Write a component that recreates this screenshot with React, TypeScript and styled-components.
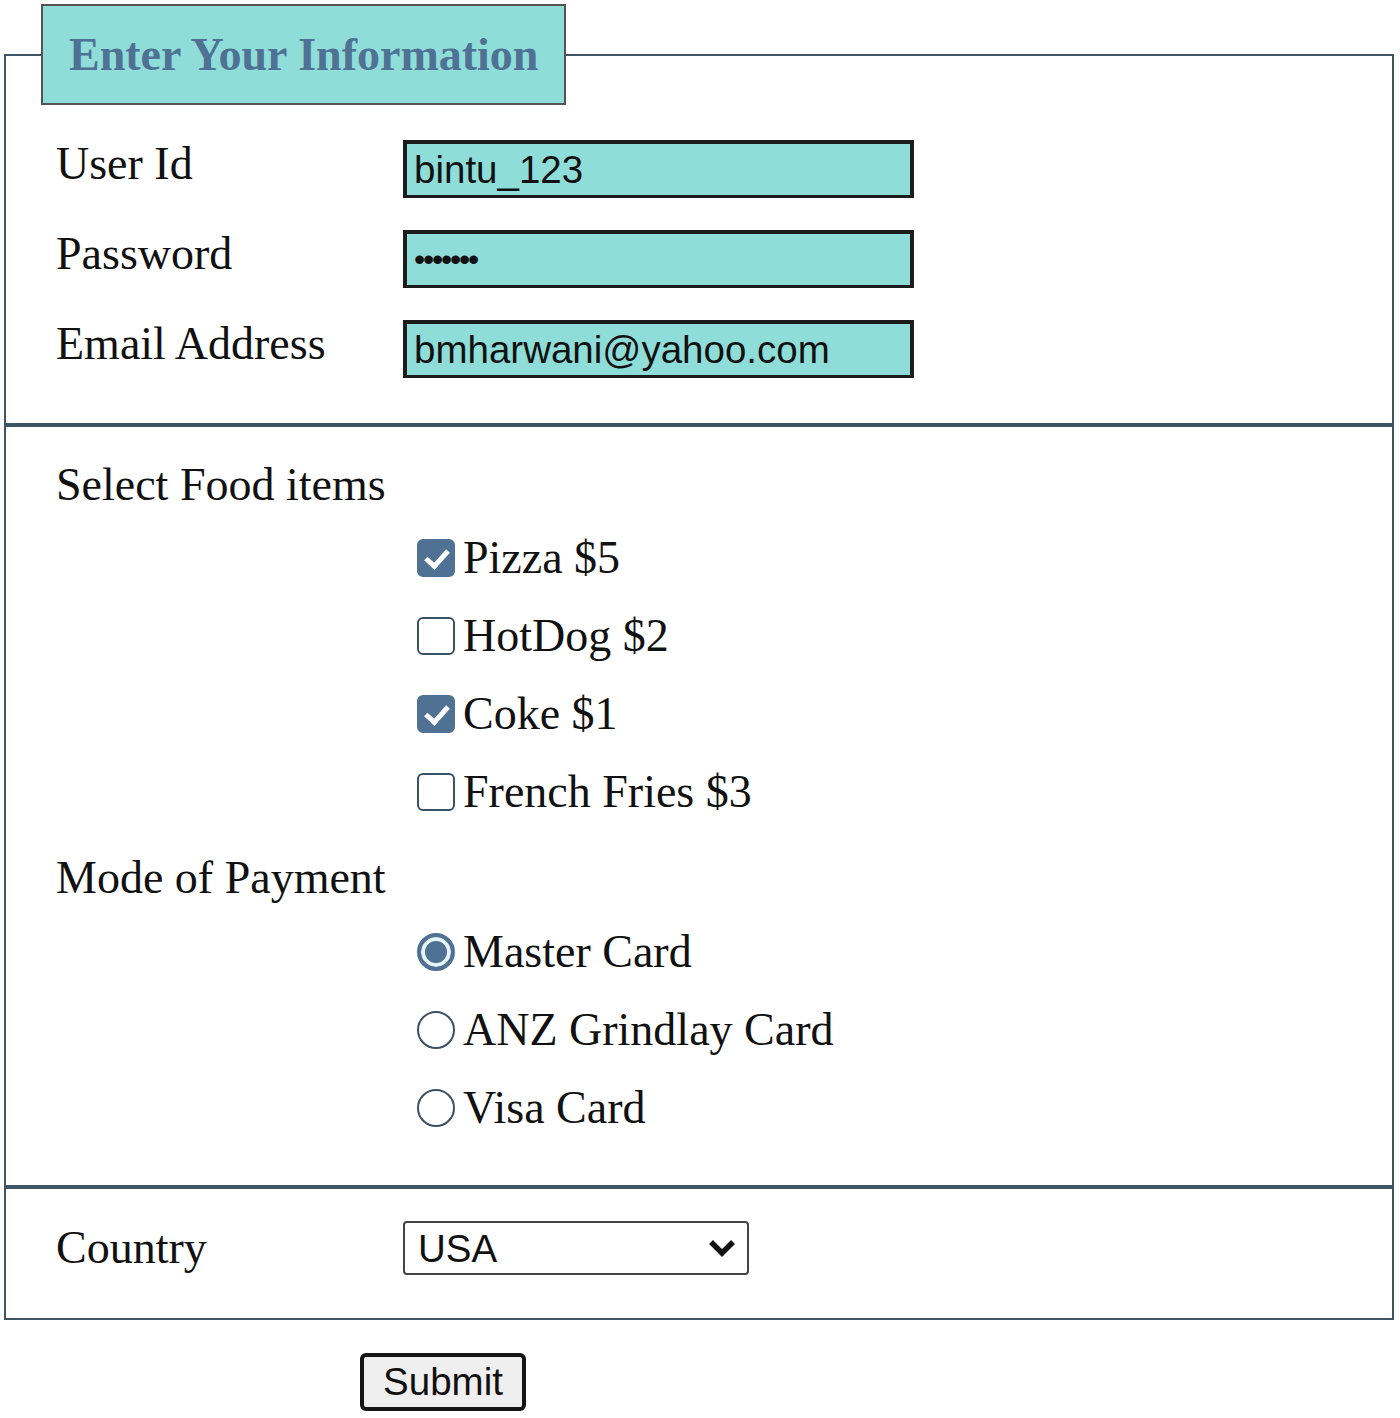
import styled, { createGlobalStyle } from "styled-components";

const GlobalStyle = createGlobalStyle`
  body {
    margin: 0;
    background: #fff;
    color: #111;
    font-family: "Liberation Serif", "Times New Roman", serif;
  }
`;

const Page = styled.form`
  width: 1390px;
  padding: 4px 0 0 4px;
`;

const InfoFieldset = styled.fieldset`
  margin: 0;
  padding: 35px 0 45px 35px;
  border: 2px solid #3e5566;
  min-inline-size: 0;
`;

const Legend = styled.legend`
  box-sizing: border-box;
  height: 101px;
  padding: 0 26px;
  background: #8fddd8;
  border: 2px solid #5a5050;
  color: #4e7194;
  font: bold 46px/97px "Liberation Serif", "Times New Roman", serif;
`;

const Section = styled.fieldset<{ $pad: string }>`
  margin: 0;
  padding: ${(p) => p.$pad};
  border: 2px solid #3e5566;
  min-inline-size: 0;
`;

const Fields = styled.div`
  display: flex;
  flex-direction: column;
  gap: 32px;
  padding-left: 15px;
`;

const FieldRow = styled.div<{ $center?: boolean }>`
  display: grid;
  grid-template-columns: 347px auto;
  align-items: ${(p) => (p.$center ? "center" : "start")};
`;

const FieldLabel = styled.label`
  font-size: 46px;
  line-height: 48px;
`;

const TextInput = styled.input<{ $dots?: boolean }>`
  box-sizing: border-box;
  width: 511px;
  height: 58px;
  margin: 0;
  padding: 0 7px;
  border: 4px solid #1c1c1c;
  border-bottom-width: 3px;
  background: #8fddd8;
  color: #111;
  font-family: "Liberation Sans", Arial, sans-serif;
  font-size: ${(p) => (p.$dots ? "32px" : "38.5px")};
  letter-spacing: ${(p) => (p.$dots ? "-2.2px" : "normal")};
  outline: none;
`;

const GroupTitle = styled.div<{ $top?: number }>`
  margin-top: ${(p) => p.$top ?? 0}px;
  font-size: 46px;
  line-height: 52px;
`;

const OptionList = styled.div<{ $top: number }>`
  margin-top: ${(p) => p.$top}px;
  padding-left: 347px;
`;

const Option = styled.label`
  display: flex;
  align-items: center;
  height: 78px;
  font-size: 46px;
  line-height: 52px;
`;

const Check = styled.input.attrs({ type: "checkbox" })`
  appearance: none;
  position: relative;
  box-sizing: border-box;
  width: 38px;
  height: 38px;
  margin: 0 8px 0 14px;
  border: 2.5px solid #3c5064;
  border-radius: 6px;
  background: #fff;

  &:checked {
    background: #4e7194;
    border-color: #4e7194;
  }

  &:checked::after {
    content: "";
    position: absolute;
    left: 11px;
    top: 4px;
    width: 9px;
    height: 18px;
    border-right: 5px solid #fff;
    border-bottom: 5px solid #fff;
    transform: rotate(42deg);
  }
`;

const Radio = styled.input.attrs({ type: "radio" })`
  appearance: none;
  box-sizing: border-box;
  width: 38px;
  height: 38px;
  margin: 0 8px 0 14px;
  border: 2.5px solid #3c5064;
  border-radius: 50%;
  background: #fff;

  &:checked {
    border: 4px solid #4e7194;
    background: #4e7194;
    box-shadow: inset 0 0 0 4px #e6f4f6;
  }
`;

const SelectWrap = styled.div`
  position: relative;
  width: 346px;
`;

const CountrySelect = styled.select`
  appearance: none;
  box-sizing: border-box;
  width: 346px;
  height: 54px;
  margin: 0;
  padding: 0 13px;
  border: 2px solid #444;
  border-radius: 4px;
  background: #fff;
  color: #111;
  font-family: "Liberation Sans", Arial, sans-serif;
  font-size: 38.5px;
`;

const Chevron = styled.svg`
  position: absolute;
  right: 12px;
  top: 50%;
  transform: translateY(-50%);
  pointer-events: none;
`;

const SubmitButton = styled.button`
  box-sizing: border-box;
  width: 166px;
  height: 58px;
  margin: 33px 0 0 356px;
  padding: 0;
  border: 4px solid #151515;
  border-radius: 6px;
  background: #efefef;
  color: #111;
  font-family: "Liberation Sans", Arial, sans-serif;
  font-size: 38.5px;
`;

const foods = [
  { name: "Pizza $5", checked: true },
  { name: "HotDog $2", checked: false },
  { name: "Coke $1", checked: true },
  { name: "French Fries $3", checked: false },
];

const cards = ["Master Card", "ANZ Grindlay Card", "Visa Card"];

const App = () => {
  return (
    <Page onSubmit={(e) => e.preventDefault()}>
      <GlobalStyle />
      <InfoFieldset>
        <Legend>Enter Your Information</Legend>
        <Fields>
          <FieldRow>
            <FieldLabel htmlFor="userid">User Id</FieldLabel>
            <TextInput id="userid" type="text" defaultValue="bintu_123" />
          </FieldRow>
          <FieldRow>
            <FieldLabel htmlFor="password">Password</FieldLabel>
            <TextInput id="password" type="password" $dots defaultValue="bintu12" />
          </FieldRow>
          <FieldRow>
            <FieldLabel htmlFor="email">Email Address</FieldLabel>
            <TextInput id="email" type="text" defaultValue="bmharwani@yahoo.com" />
          </FieldRow>
        </Fields>
      </InfoFieldset>

      <Section $pad="32px 0 38px 50px">
        <GroupTitle>Select Food items</GroupTitle>
        <OptionList $top={8}>
          {foods.map((f) => (
            <Option key={f.name}>
              <Check defaultChecked={f.checked} />
              {f.name}
            </Option>
          ))}
        </OptionList>
        <GroupTitle $top={21}>Mode of Payment</GroupTitle>
        <OptionList $top={9}>
          {cards.map((c, i) => (
            <Option key={c}>
              <Radio name="payment" defaultChecked={i === 0} />
              {c}
            </Option>
          ))}
        </OptionList>
      </Section>

      <Section $pad="32px 0 43px 50px">
        <FieldRow $center>
          <FieldLabel htmlFor="country">Country</FieldLabel>
          <SelectWrap>
            <CountrySelect id="country" defaultValue="USA">
              <option>USA</option>
              <option>UK</option>
              <option>India</option>
            </CountrySelect>
            <Chevron width="30" height="20" viewBox="0 0 30 20">
              <polyline points="4,4 15,15 26,4" fill="none" stroke="#111" strokeWidth="5.5" />
            </Chevron>
          </SelectWrap>
        </FieldRow>
      </Section>

      <SubmitButton type="submit">Submit</SubmitButton>
    </Page>
  );
};

export default App;
